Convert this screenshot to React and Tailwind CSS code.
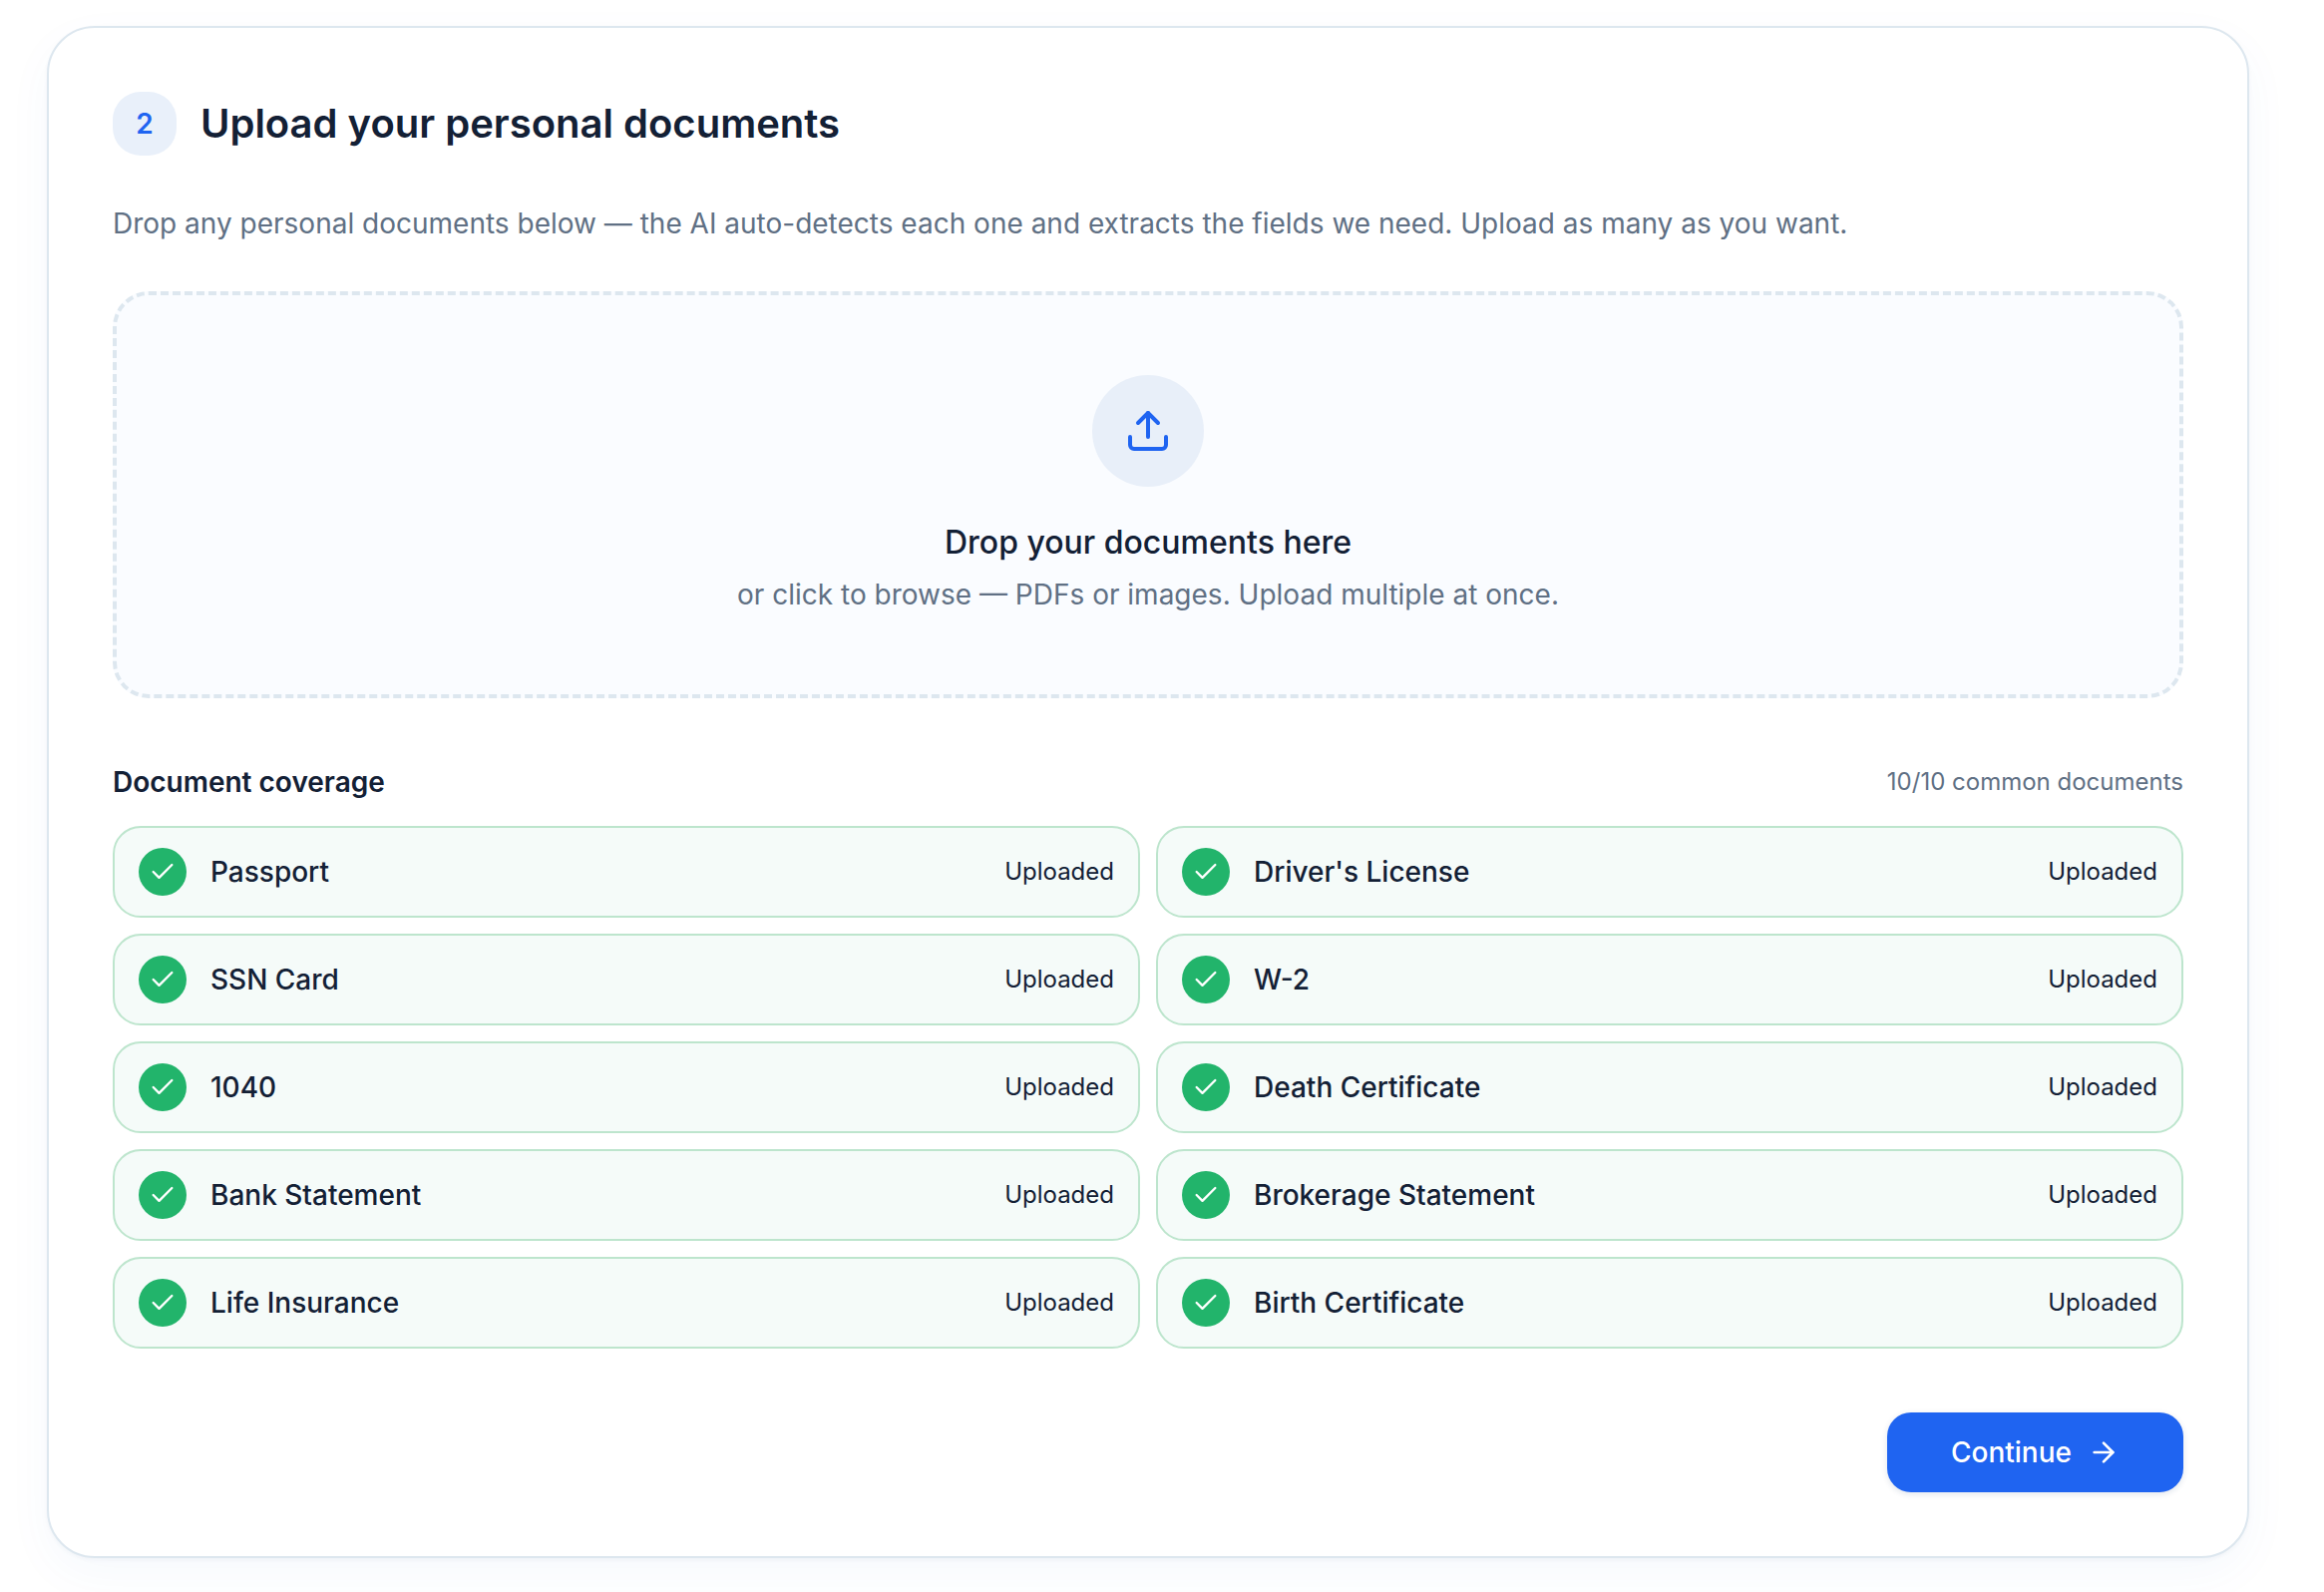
import { ArrowRight, Check, Upload } from 'lucide-react'

const DOCUMENTS = [
  'Passport',
  "Driver's License",
  'SSN Card',
  'W-2',
  '1040',
  'Death Certificate',
  'Bank Statement',
  'Brokerage Statement',
  'Life Insurance',
  'Birth Certificate',
]

function DocumentRow({ name }) {
  return (
    <div className="flex items-center gap-6 h-[92px] px-6 rounded-[28px] border-2 border-[#bde5cd] bg-[#f5fbf9]">
      <div className="w-12 h-12 rounded-full bg-[#22b46b] text-white flex items-center justify-center">
        <Check size={28} />
      </div>
      <span className="flex-1 text-[28px] leading-10 font-medium">{name}</span>
      <span className="text-2xl leading-8">Uploaded</span>
    </div>
  )
}

export default function App() {
  return (
    <div className="min-h-screen overflow-hidden bg-white pt-[26px] pl-[47px] pr-[75px] font-['Inter',sans-serif] text-[#132035]">
      <section className="h-[1536px] p-16 rounded-[48px] border-2 border-[#dde7ef] bg-white shadow-[0_2px_4px_rgba(15,50,100,0.04),0_16px_48px_rgba(30,90,200,0.04)]">
        <div className="flex items-center gap-6">
          <div className="w-16 h-16 rounded-[28px] bg-[#e9f0fa] text-[#1f64f1] text-[28px] font-semibold flex items-center justify-center">
            2
          </div>
          <h2 className="text-[40px] leading-[56px] font-semibold">Upload your personal documents</h2>
        </div>

        <p className="mt-12 text-[28px] leading-10 text-[#607084]">
          Drop any personal documents below — the AI auto-detects each one and extracts the fields we need. Upload as many as you want.
        </p>

        {/* Drop zone */}
        <div className="mt-12 h-[408px] py-20 flex flex-col items-center rounded-[36px] border-4 border-dashed border-[#dde7ef] bg-[#fafcff] cursor-pointer">
          <div className="w-28 h-28 rounded-full bg-[#e8eff9] text-[#1f64f1] flex items-center justify-center">
            <Upload size={48} />
          </div>
          <p className="mt-8 text-[32px] leading-[48px] font-medium">Drop your documents here</p>
          <p className="mt-2 text-[28px] leading-10 text-[#607084]">
            or click to browse — PDFs or images. Upload multiple at once.
          </p>
        </div>

        {/* Coverage list */}
        <div className="mt-16 flex items-center justify-between">
          <h3 className="text-[28px] leading-10 font-semibold">Document coverage</h3>
          <span className="text-2xl leading-8 text-[#607084]">10/10 common documents</span>
        </div>
        <div className="mt-6 grid grid-cols-2 gap-4">
          {DOCUMENTS.map((name) => (
            <DocumentRow key={name} name={name} />
          ))}
        </div>

        <div className="mt-16 flex justify-end">
          <button className="h-20 px-16 flex items-center gap-4 rounded-3xl bg-[#1f64f1] text-white text-[28px] font-medium shadow-[0_2px_6px_rgba(15,50,100,0.12)]">
            Continue
            <ArrowRight size={32} />
          </button>
        </div>
      </section>
    </div>
  )
}
